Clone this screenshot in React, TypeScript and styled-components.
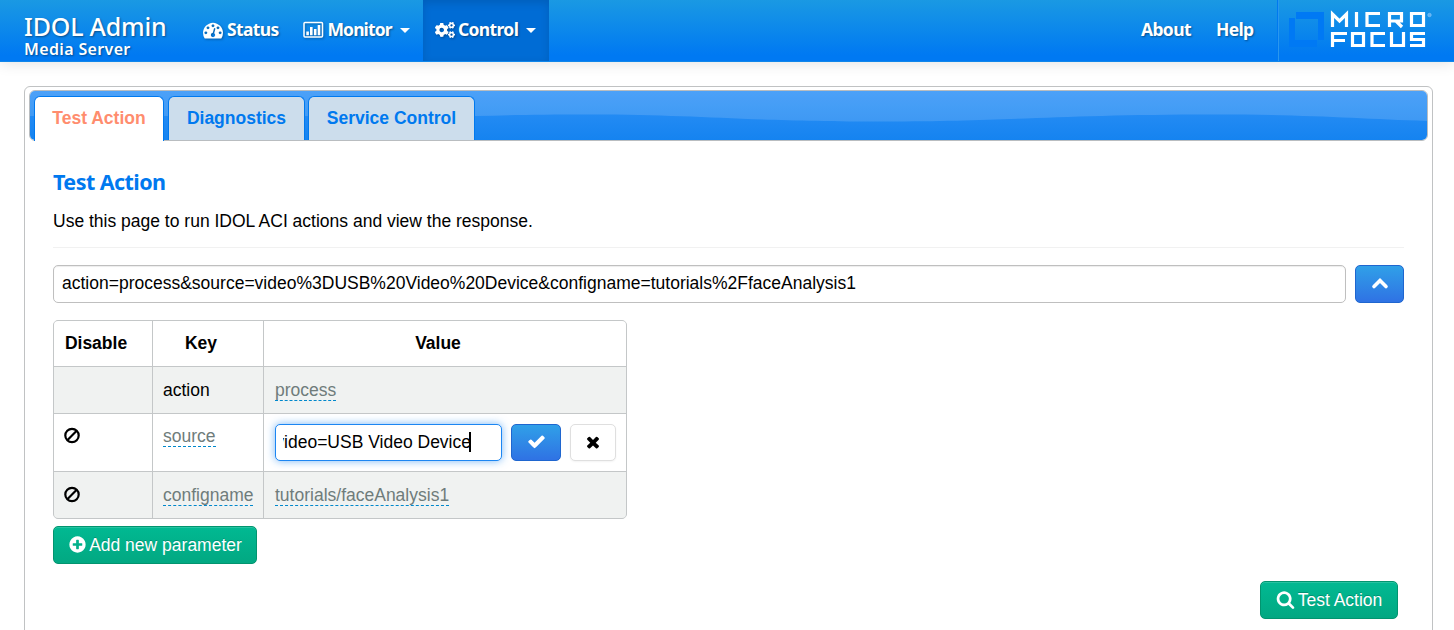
import React from 'react';
import styled, { createGlobalStyle, css } from 'styled-components';
import { FaCogs } from 'react-icons/fa';

const Global = createGlobalStyle`
  * { box-sizing: border-box; }
  body { margin: 0; background: #fff; overflow: hidden; color: #000;
    font: 17.5px/27px "Liberation Sans", Arial, sans-serif; }
`;

const brandFont = css`
  font-family: "Noto Sans", "Open Sans", sans-serif;
`;

const Navbar = styled.header`
  display: flex;
  height: 62px;
  padding-left: 24px;
  background: linear-gradient(#1a99e3, #0079f2 90%);
  border-bottom: 1px solid #1086ea;
  box-shadow: 0 1px 14px rgba(0, 0, 0, 0.12);
  color: #fff;
  ${brandFont}
  text-shadow: 1px 1px 2px rgba(0, 0, 0, 0.4);
`;

const Brand = styled.div`
  width: 166px;
  padding-top: 12px;
  white-space: nowrap;
`;

const BrandName = styled.div`
  font-size: 25px;
  font-weight: 500;
  line-height: 29px;
  letter-spacing: -0.2px;
`;

const BrandSub = styled.div`
  font-size: 16px;
  font-weight: 600;
  line-height: 16px;
  letter-spacing: 0.35px;
`;

const Nav = styled.nav`
  display: flex;
`;

const NavItem = styled.a<{ $w: number; $active?: boolean; $gap?: number; $pad?: number; $track?: number }>`
  display: flex;
  align-items: center;
  width: ${p => p.$w}px;
  height: 61px;
  padding: 0 0 2px ${p => p.$pad ?? 12}px;
  gap: ${p => p.$gap ?? 4}px;
  font-size: 17.5px;
  font-weight: 700;
  letter-spacing: ${p => p.$track ?? -0.65}px;
  white-space: nowrap;
  ${p => p.$active && css`
    background: #006cd5;
    box-shadow: inset 0 3px 8px rgba(0, 0, 0, 0.125);
  `}
  svg { flex: none; filter: drop-shadow(1px 1px 1px rgba(0, 0, 0, 0.3)); }
`;

const Caret = styled.span`
  margin: 2px 0 0 5px;
  border: 5px solid transparent;
  border-top-color: #fff;
  border-bottom: 0;
`;

const NavRight = styled(Nav)`
  margin-left: auto;
`;

const LogoBox = styled.div`
  width: 177px;
  height: 61px;
  border-left: 1px solid #0079ef;
  box-shadow: inset 1px 0 0 #2a97ee;
`;

const Panel = styled.main`
  width: 1409px;
  height: 560px;
  margin: 24px 0 0 24px;
  padding: 3px 4px;
  border: 1px solid #c0c2c3;
  border-radius: 6px;
`;

const TabBar = styled.div`
  display: grid;
  width: 1399px;
  height: 51px;
  border: 1px solid #b9bdc0;
  border-radius: 6px;
  > * { grid-area: 1 / 1; }
  > svg { border-radius: 5px; }
`;

const Tabs = styled.div`
  display: flex;
  padding: 5px 0 0 4px;
  z-index: 1;
`;

const Tab = styled.div<{ $w: number; $active?: boolean }>`
  width: ${p => p.$w}px;
  height: ${p => (p.$active ? 45 : 44)}px;
  margin-right: ${p => (p.$active ? 4 : 3)}px;
  border: 1px solid #0079ef;
  border-bottom: 0;
  border-radius: 6px 6px 0 0;
  background: ${p => (p.$active ? '#fff' : '#ccddec')};
  color: ${p => (p.$active ? '#ff8d6e' : '#0079ef')};
  font-weight: bold;
  line-height: 42px;
  text-align: center;
`;

const Content = styled.section`
  padding: 27px 24px 0;
`;

const Title = styled.h2`
  margin: 0;
  ${brandFont}
  font-size: 21.5px;
  font-weight: 700;
  line-height: 28px;
  letter-spacing: -0.55px;
  color: #0079ef;
`;

const Intro = styled.p`
  margin: 12px 0 12px;
`;

const Rule = styled.div`
  height: 1px;
  background: #f1f1f1;
`;

const ActionRow = styled.div`
  display: flex;
  gap: 9px;
  margin: 17px 0;
`;

const field = css`
  height: 38px;
  border: 1px solid #bfbfbf;
  border-radius: 5px;
  line-height: 35px;
  white-space: nowrap;
`;

const ActionField = styled.div`
  ${field}
  width: 1293px;
  padding-left: 8px;
  box-shadow: inset 0 1px 1px rgba(0, 0, 0, 0.075);
`;

const Button = styled.button<{ $kind: 'primary' | 'plain' | 'success'; $w: number; $h?: number; $gap?: number }>`
  display: flex;
  align-items: center;
  justify-content: center;
  gap: ${p => p.$gap ?? 3}px;
  flex: none;
  width: ${p => p.$w}px;
  height: ${p => p.$h || 38}px;
  padding: 0;
  border-radius: 5px;
  font: 17.5px "Liberation Sans", Arial, sans-serif;
  white-space: nowrap;
  ${p => p.$kind === 'primary' && css`
    color: #fff;
    border: 1px solid #1f66cf;
    background: linear-gradient(#30a0e8, #2f72e4);
  `}
  ${p => p.$kind === 'plain' && css`
    color: #000;
    border: 1px solid #dfdfdf;
    background: #fff;
    box-shadow: 0 1px 2px rgba(0, 0, 0, 0.05);
  `}
  ${p => p.$kind === 'success' && css`
    color: #fff;
    border: 1px solid #02946f;
    background: linear-gradient(#01b992, #02a882);
    box-shadow: inset 0 1px 0 rgba(255, 255, 255, 0.15);
    text-shadow: 0 -1px 0 rgba(0, 0, 0, 0.2);
    svg { margin-top: -1px; }
  `}
  ${p => p.$h && css`padding-bottom: 2px;`}
`;

const Table = styled.div`
  display: grid;
  grid-template-columns: 98px 110px 362px;
  grid-template-rows: 45px 46px 57px 46px;
  gap: 1px;
  width: 574px;
  background: #c4c7c8;
  border: 1px solid #c4c7c8;
  border-radius: 5px;
  overflow: hidden;
`;

const Cell = styled.div<{ $head?: boolean; $shade?: boolean; $tight?: boolean }>`
  display: flex;
  align-items: flex-start;
  padding: ${p => (p.$tight ? 9 : 10)}px 0 0 10px;
  background: ${p => (p.$shade ? '#f0f2f1' : '#fff')};
  ${p => p.$head && css`
    justify-content: center;
    padding: 9px 14px 0 0;
    font-weight: bold;
  `}
`;

const Editable = styled.span<{ $indent?: boolean }>`
  margin-left: ${p => (p.$indent ? 1 : 0)}px;
  height: 24px;
  color: #6f7c7b;
  border-bottom: 1px dashed #0088cc;
`;

const Editor = styled.div`
  display: flex;
  gap: 9px;
  padding-left: 1px;
`;

const EditField = styled.div`
  ${field}
  display: flex;
  width: 227px;
  height: 37px;
  padding-left: 7px;
  border-color: #1c86f2;
  background: #fff;
  box-shadow: 0 0 8px rgba(30, 135, 242, 0.6);
`;

const EditText = styled.div`
  display: flex;
  justify-content: flex-end;
  width: 188px;
  overflow: hidden;
`;

const TextCursor = styled.div`
  width: 2px;
  height: 20px;
  margin: 7px 0 0 -2px;
  background: #000;
  z-index: 1;
`;

const Footer = styled.div`
  display: flex;
  justify-content: flex-end;
  padding: 17px 6px 0 0;
`;

const AddRow = styled.div`
  padding-top: 7px;
`;

const ICONS = {
  gauge: 'M384 1152q0-53-37.5-90.5t-90.5-37.5-90.5 37.5-37.5 90.5 37.5 90.5 90.5 37.5 90.5-37.5 37.5-90.5zm192-448q0-53-37.5-90.5t-90.5-37.5-90.5 37.5-37.5 90.5 37.5 90.5 90.5 37.5 90.5-37.5 37.5-90.5zm428 481l101-382q6-26-7.5-48.5t-38.5-29.5-48 6.5-30 39.5l-101 382q-60 5-107 43.5t-63 98.5q-20 77 20 146t117 89 146-20 89-117q16-60-6-117t-72-91zm660-33q0-53-37.5-90.5t-90.5-37.5-90.5 37.5-37.5 90.5 37.5 90.5 90.5 37.5 90.5-37.5 37.5-90.5zm-640-640q0-53-37.5-90.5t-90.5-37.5-90.5 37.5-37.5 90.5 37.5 90.5 90.5 37.5 90.5-37.5 37.5-90.5zm448 192q0-53-37.5-90.5t-90.5-37.5-90.5 37.5-37.5 90.5 37.5 90.5 90.5 37.5 90.5-37.5 37.5-90.5zm320 448q0 261-141 483-19 29-54 29h-1402q-35 0-54-29-141-221-141-483 0-182 71-348t191-286 286-191 348-71 348 71 286 191 191 286 71 348z',
  check: 'M1671 566q0 40-28 68l-724 724-136 136q-28 28-68 28t-68-28l-136-136-362-362q-28-28-28-68t28-68l136-136q28-28 68-28t68 28l294 295 656-657q28-28 68-28t68 28l136 136q28 28 28 68z',
  times: 'M1490 1322q0 40-28 68l-136 136q-28 28-68 28t-68-28l-294-294-294 294q-28 28-68 28t-68-28l-136-136q-28-28-28-68t28-68l294-294-294-294q-28-28-28-68t28-68l136-136q28-28 68-28t68 28l294 294 294-294q28-28 68-28t68 28l136 136q28 28 28 68t-28 68l-294 294 294 294q28 28 28 68z',
  plus: 'M1344 960v-128q0-26-19-45t-45-19h-256v-256q0-26-19-45t-45-19h-128q-26 0-45 19t-19 45v256h-256q-26 0-45 19t-19 45v128q0 26 19 45t45 19h256v256q0 26 19 45t45 19h128q26 0 45-19t19-45v-256h256q26 0 45-19t19-45zm320-64q0 209-103 385.5t-279.5 279.5-385.5 103-385.5-103-279.5-279.5-103-385.5 103-385.5 279.5-279.5 385.5-103 385.5 103 279.5 279.5 103 385.5z',
  search: 'M1216 832q0-185-131.5-316.5t-316.5-131.5-316.5 131.5-131.5 316.5 131.5 316.5 316.5 131.5 316.5-131.5 131.5-316.5zm512 832q0 52-38 90t-90 38q-54 0-90-38l-343-342q-179 124-399 124-143 0-273.5-55.5t-225-150-150-225-55.5-273.5 55.5-273.5 150-225 225-150 273.5-55.5 273.5 55.5 225 150 150 225 55.5 273.5q0 220-124 399l343 343q37 37 37 90z',
};

const Icon = ({ name, size = 19 }: { name: keyof typeof ICONS; size?: number }) => (
  <svg width={size} height={size} viewBox="0 0 1792 1792" fill="currentColor"><path d={ICONS[name]} /></svg>
);

const ChartIcon = () => (
  <svg width="21" height="18" viewBox="0 0 21 18" fill="#fff">
    <rect x="1" y="1.5" width="18.5" height="14.5" rx="1" fill="none" stroke="#fff" strokeWidth="1.5" />
    <path d="M3.3 10.5h2.6v3.7H3.3zM7 6h2.6v8.2H7zM10.9 8h2.6v6.2h-2.6zM14.7 4h2.6v10.2h-2.6z" />
  </svg>
);

const BanIcon = () => (
  <svg width="16" height="25" viewBox="1 0 16 25" fill="none" stroke="#000" strokeWidth="2.2">
    <circle cx="9" cy="12.5" r="6.7" />
    <path d="M13.7 7.8L4.3 17.2" />
  </svg>
);

const ChevronUp = () => (
  <svg width="18" height="14" viewBox="0 0 18 14" fill="none" stroke="#fff" strokeWidth="3.6" strokeLinecap="round">
    <path d="M3 9.500L9 3.500L15 9.500" />
  </svg>
);

const Wave = () => (
  <svg width="1397" height="49" viewBox="30 91 1397 49">
    <defs>
      <linearGradient id="low" x1="0" y1="0" x2="0" y2="1">
        <stop offset="0" stopColor="#2f92f7" /><stop offset="1" stopColor="#1583f0" />
      </linearGradient>
    </defs>
    <rect x="30" y="91" width="1398" height="49" fill="url(#low)" />
    <path d="M30 91H1428V121C1360 119 1310 114.5 1215 114.5C1060 114.5 1010 121.500 885 121.500C740 121.500 700 114.500 590 114.500C540 114.500 510 115 475 116H30Z" fill="#fff" fillOpacity="0.14" />
  </svg>
);

const Logo = () => (
  <svg width="176" height="61" viewBox="1278 0 176 61">
    <path d="M1296 12h28v28h-6V19h-22zM1289 18h6v22h22v7h-28z" fill="#0079f4" />
    <g fill="none" stroke="#fff" strokeWidth="3.2">
      <path d="M1332.500 27V14L1339.500 21L1346.500 14V27" />
      <path d="M1356.500 12V27" />
      <path d="M1380 13.500H1367V25.500H1380" />
      <path d="M1389.500 27V13.500H1401.500V21H1390M1396 21L1402 27" />
      <path d="M1411.500 13.500H1423.500V25.500H1411.500Z" />
      <path d="M1332.500 47V33.500H1347M1333 40.500H1345" />
      <path d="M1352.500 33.500H1363.500V45.500H1352.500Z" />
      <path d="M1385 33.500H1372V45.500H1385" />
      <path d="M1391.500 32V45.500H1403.500V32" />
      <path d="M1425 33.500H1411.500V39.500H1423.500V45.500H1410" />
    </g>
    <circle cx="1429.500" cy="15" r="1.700" fill="#5fb0f2" stroke="#7cc0f5" strokeWidth="0.800" />
  </svg>
);

export default function App() {
  return (
    <>
      <Global />
      <Navbar>
        <Brand>
          <BrandName>IDOL Admin</BrandName>
          <BrandSub>Media Server</BrandSub>
        </Brand>
        <Nav>
          <NavItem $w={101} $pad={13}><Icon name="gauge" size={20} />Status</NavItem>
          <NavItem $w={132} $gap={3.5} $track={-0.9}><ChartIcon />Monitor<Caret /></NavItem>
          <NavItem $w={126} $gap={3} $active><FaCogs size={20} />Control<Caret /></NavItem>
        </Nav>
        <NavRight>
          <NavItem $w={75}>About</NavItem>
          <NavItem $w={73}>Help</NavItem>
          <LogoBox><Logo /></LogoBox>
        </NavRight>
      </Navbar>
      <Panel>
        <TabBar>
          <Wave />
          <Tabs>
            <Tab $w={130} $active>Test Action</Tab>
            <Tab $w={137}>Diagnostics</Tab>
            <Tab $w={167}>Service Control</Tab>
          </Tabs>
        </TabBar>
        <Content>
          <Title>Test Action</Title>
          <Intro>Use this page to run IDOL ACI actions and view the response.</Intro>
          <Rule />
          <ActionRow>
            <ActionField>action=process&amp;source=video%3DUSB%20Video%20Device&amp;configname=tutorials%2FfaceAnalysis1</ActionField>
            <Button $kind="primary" $w={49}><ChevronUp /></Button>
          </ActionRow>
          <Table>
            <Cell $head>Disable</Cell>
            <Cell $head>Key</Cell>
            <Cell $head>Value</Cell>
            <Cell $shade />
            <Cell $shade>action</Cell>
            <Cell $shade><Editable $indent>process</Editable></Cell>
            <Cell $tight><BanIcon /></Cell>
            <Cell $tight><Editable>source</Editable></Cell>
            <Cell>
              <Editor>
                <EditField><EditText>video=USB Video Device</EditText><TextCursor /></EditField>
                <Button $kind="primary" $w={50} $h={37}><Icon name="check" /></Button>
                <Button $kind="plain" $w={46} $h={37}><Icon name="times" size={18} /></Button>
              </Editor>
            </Cell>
            <Cell $shade><BanIcon /></Cell>
            <Cell $shade><Editable>configname</Editable></Cell>
            <Cell $shade><Editable $indent>tutorials/faceAnalysis1</Editable></Cell>
          </Table>
          <AddRow>
            <Button $kind="success" $w={204} $gap={2}><Icon name="plus" />Add new parameter</Button>
          </AddRow>
          <Footer>
            <Button $kind="success" $w={138}><Icon name="search" />Test Action</Button>
          </Footer>
        </Content>
      </Panel>
    </>
  );
}
